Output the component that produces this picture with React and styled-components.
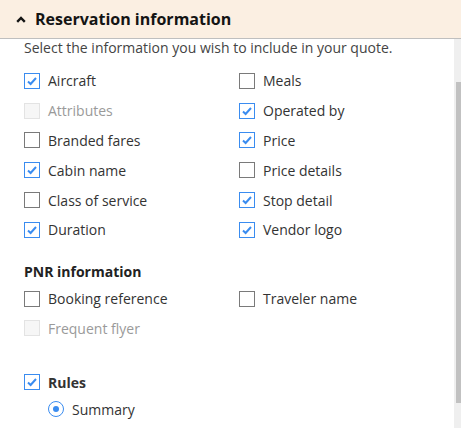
import React from 'react';
import styled, { createGlobalStyle } from 'styled-components';

const GlobalStyle = createGlobalStyle`
  body {
    margin: 0;
    background: #ffffff;
    font-family: 'Open Sans', 'Noto Sans', sans-serif;
  }
`

const Panel = styled.div`
  width: 461px;
  height: 428px;
  display: flex;
  flex-direction: column;
  overflow: hidden;
`

const Header = styled.div`
  height: 38px;
  flex-shrink: 0;
  background: #fbefe2;
  border-bottom: 1px solid #bfbfbf;
  display: flex;
  align-items: center;
  padding-left: 16px;
  gap: 9px;
`

const Title = styled.h2`
  margin: 0;
  font-size: 16px;
  font-weight: 700;
  color: #141414;
`

const Body = styled.div`
  flex: 1;
  display: flex;
  min-height: 0;
`

const Content = styled.div`
  flex: 1;
  padding-left: 24px;
  color: #333333;
  font-size: 14px;
`

const Track = styled.div`
  width: 7px;
  background: #efefef;
  display: flex;
  justify-content: flex-end;
`

const Thumb = styled.div`
  width: 5px;
  height: 321px;
  margin-top: 43px;
  background: #c1c1c1;
`

const Intro = styled.p`
  margin: 0;
  line-height: 18px;
  color: #444444;
`

const Grid = styled.div`
  display: grid;
  grid-template-columns: 215px 1fr;
  grid-auto-rows: 29.8px;
  margin-top: ${p => p.$top || 0}px;
`

const Row = styled.label`
  display: flex;
  align-items: center;
  gap: 8px;
  color: ${p => (p.$disabled ? '#9a9a9a' : '#333333')};
  font-weight: ${p => (p.$bold ? 700 : 400)};
  height: ${p => p.$h || 29.8}px;
  padding-left: ${p => p.$indent || 0}px;
`

const Box = styled.span`
  width: 16px;
  height: 16px;
  box-sizing: border-box;
  flex-shrink: 0;
  border: 1px solid ${p => (p.$checked ? '#3a8cf0' : p.$disabled ? '#e3e3e3' : '#7a7a7a')};
  background: ${p => (p.$disabled ? '#f6f6f6' : '#ffffff')};
  display: flex;
  align-items: center;
  justify-content: center;
`

const Radio = styled.span`
  width: 16px;
  height: 16px;
  box-sizing: border-box;
  border-radius: 50%;
  border: 1.5px solid #3a8cf0;
  display: flex;
  align-items: center;
  justify-content: center;

  &::after {
    content: '';
    width: 6px;
    height: 6px;
    border-radius: 50%;
    background: #3a8cf0;
  }
`

const Heading = styled.h3`
  margin: 17px 0 2px;
  font-size: 14px;
  font-weight: 700;
  line-height: 20px;
  color: #222222;
`

const Check = () => (
  <svg width="12" height="10" viewBox="0 0 12 10">
    <polyline points="2,5.5 4.6,8 10,2" fill="none" stroke="#3a8cf0" strokeWidth="2" />
  </svg>
)

const Chevron = () => (
  <svg width="10" height="7" viewBox="0 0 10 7">
    <polyline points="1.2,5.8 5,2 8.8,5.8" fill="none" stroke="#141414" strokeWidth="2.4" />
  </svg>
)

const Option = ({ label, checked, disabled, bold }) => (
  <Row $disabled={disabled} $bold={bold}>
    <Box $checked={checked} $disabled={disabled}>{checked && <Check />}</Box>
    {label}
  </Row>
)

const reservation = [
  { label: 'Aircraft', checked: true },
  { label: 'Meals' },
  { label: 'Attributes', disabled: true },
  { label: 'Operated by', checked: true },
  { label: 'Branded fares' },
  { label: 'Price', checked: true },
  { label: 'Cabin name', checked: true },
  { label: 'Price details' },
  { label: 'Class of service' },
  { label: 'Stop detail', checked: true },
  { label: 'Duration', checked: true },
  { label: 'Vendor logo', checked: true },
]

const pnr = [
  { label: 'Booking reference' },
  { label: 'Traveler name' },
  { label: 'Frequent flyer', disabled: true },
]

export default function App() {
  return (
    <Panel>
      <GlobalStyle />
      <Header>
        <Chevron />
        <Title>Reservation information</Title>
      </Header>
      <Body>
        <Content>
          <Intro>Select the information you wish to include in your quote.</Intro>
          <Grid $top={9}>
            {reservation.map(o => <Option key={o.label} {...o} />)}
          </Grid>
          <Heading>PNR information</Heading>
          <Grid>
            {pnr.map(o => <Option key={o.label} {...o} />)}
          </Grid>
          <Grid $top={24}>
            <Option label="Rules" checked bold />
          </Grid>
          <Row $h={24} $indent={24}>
            <Radio />
            Summary
          </Row>
        </Content>
        <Track>
          <Thumb />
        </Track>
      </Body>
    </Panel>
  )
}
